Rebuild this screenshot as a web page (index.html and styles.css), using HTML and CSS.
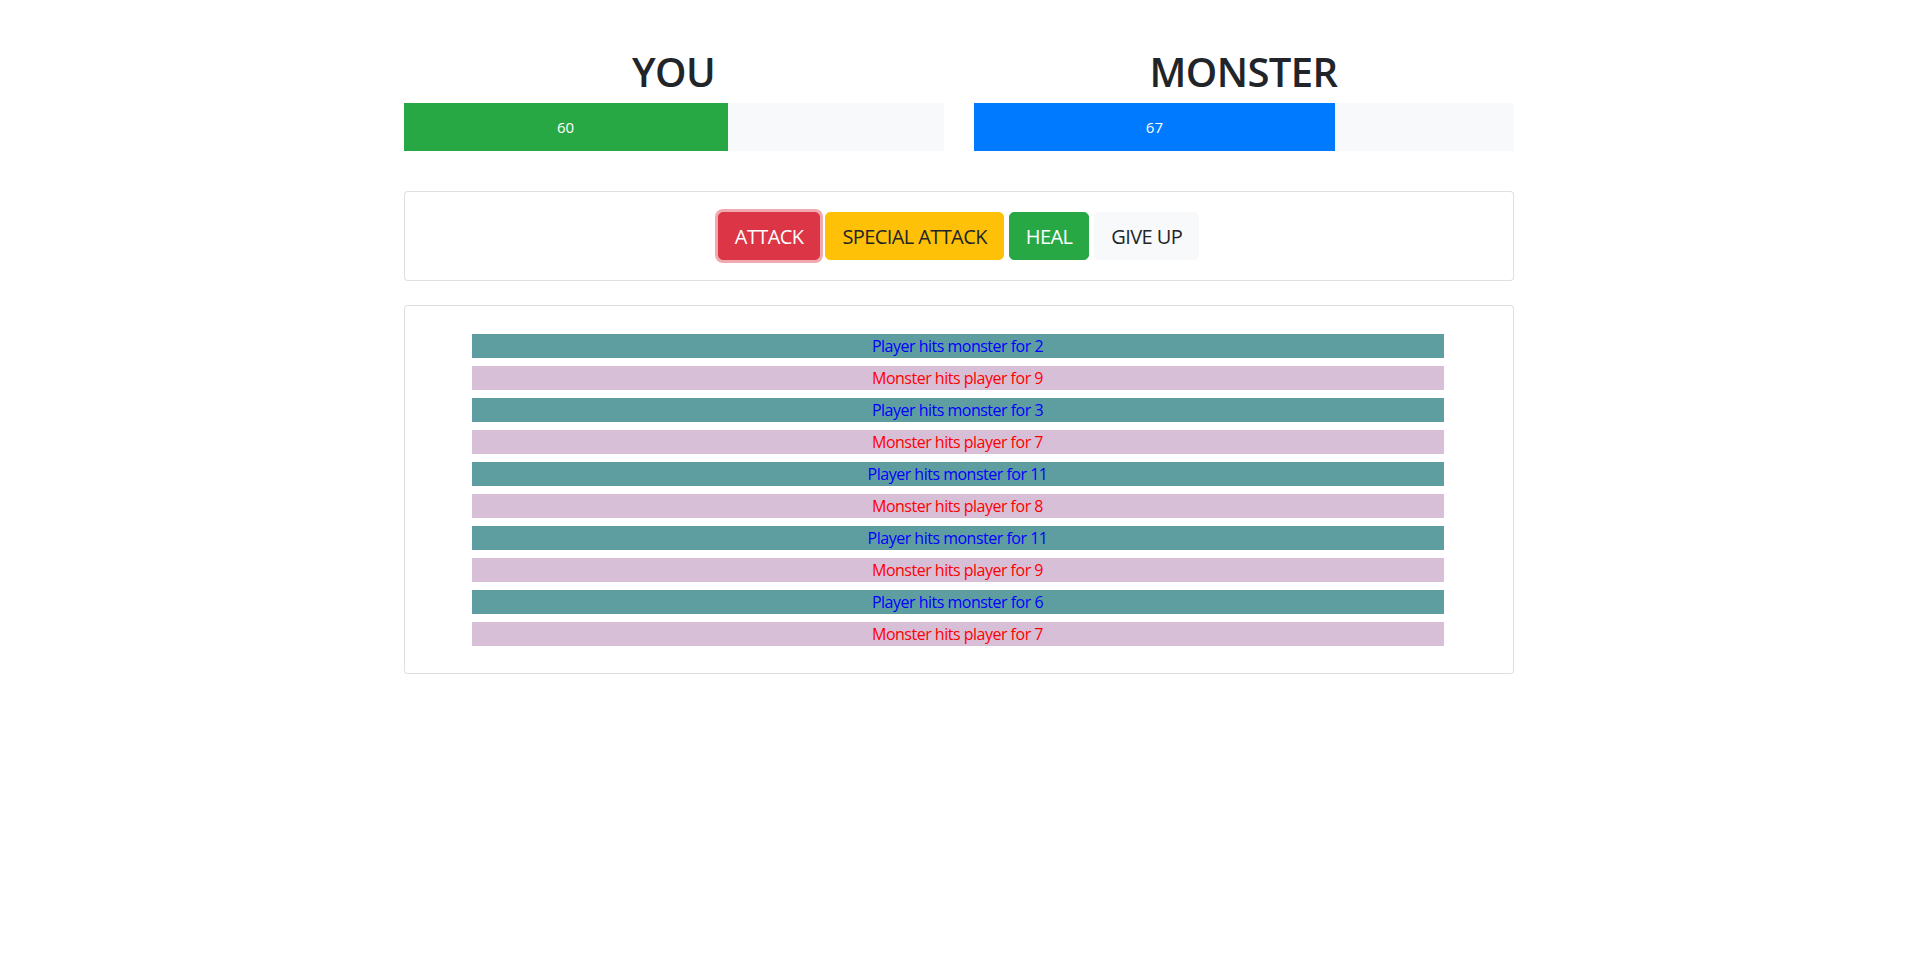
FILE: index.html
```html
<!DOCTYPE html>
<html lang="en">
<head>
<meta charset="utf-8">
<title>Monster Slayer</title>
<link rel="stylesheet" href="styles.css">
</head>
<body>
<div class="container">
  <section class="stats">
    <div class="stat">
      <h1 class="stat-title">YOU</h1>
      <div class="progress">
        <div class="progress-bar bar-player" style="width: 60%">60</div>
      </div>
    </div>
    <div class="stat">
      <h1 class="stat-title">MONSTER</h1>
      <div class="progress">
        <div class="progress-bar bar-monster" style="width: 67%">67</div>
      </div>
    </div>
  </section>

  <section class="card controls">
    <button class="btn btn-danger btn-focus">ATTACK</button>
    <button class="btn btn-warning">SPECIAL ATTACK</button>
    <button class="btn btn-success">HEAL</button>
    <button class="btn btn-light">GIVE UP</button>
  </section>

  <section class="card log">
    <ul class="log-list">
      <li class="log-item player-turn">Player hits monster for 2</li>
      <li class="log-item monster-turn">Monster hits player for 9</li>
      <li class="log-item player-turn">Player hits monster for 3</li>
      <li class="log-item monster-turn">Monster hits player for 7</li>
      <li class="log-item player-turn">Player hits monster for 11</li>
      <li class="log-item monster-turn">Monster hits player for 8</li>
      <li class="log-item player-turn">Player hits monster for 11</li>
      <li class="log-item monster-turn">Monster hits player for 9</li>
      <li class="log-item player-turn">Player hits monster for 6</li>
      <li class="log-item monster-turn">Monster hits player for 7</li>
    </ul>
  </section>
</div>
</body>
</html>
```

FILE: styles.css
```css
* {
  box-sizing: border-box;
}

body {
  margin: 0;
  background: #fff;
  color: #212529;
  font-family: "Open Sans", "Noto Sans", "Liberation Sans", sans-serif;
  font-size: 16px;
  line-height: 1.5;
}

.container {
  width: 1110px;
  margin: 0 auto;
  padding-top: 48px;
}

.stats {
  display: grid;
  grid-template-columns: 1fr 1fr;
  column-gap: 30px;
}

.stat-title {
  margin: 0 0 7px;
  font-size: 40px;
  line-height: 48px;
  font-weight: 600;
  text-align: center;
  letter-spacing: -0.6px;
}

.progress {
  display: flex;
  height: 48px;
  background: #f8f9fa;
}

.progress-bar {
  display: flex;
  align-items: center;
  justify-content: center;
  color: #fff;
  font-size: 15px;
}

.bar-player {
  background: #28a745;
}

.bar-monster {
  background: #007bff;
}

.card {
  border: 1px solid rgba(0, 0, 0, 0.125);
  border-radius: 4px;
  background: #fff;
}

.controls {
  margin-top: 40px;
  padding: 20px;
  display: flex;
  justify-content: center;
  gap: 5px;
}

.btn {
  font-family: inherit;
  font-size: 20px;
  line-height: 30px;
  padding: 9px 16px 7px;
  border: 1px solid transparent;
  border-radius: 5px;
  letter-spacing: -0.6px;
  cursor: pointer;
}

.btn-danger {
  background: #dc3545;
  border-color: #dc3545;
  color: #fff;
}

.btn-focus {
  box-shadow: 0 0 0 3px rgba(225, 83, 97, 0.5);
}

.btn-warning {
  background: #ffc107;
  border-color: #ffc107;
  color: #212529;
}

.btn-success {
  background: #28a745;
  border-color: #28a745;
  color: #fff;
}

.btn-light {
  background: #f8f9fa;
  border-color: #f8f9fa;
  color: #212529;
}

.log {
  margin-top: 24px;
  padding: 28px 69px 27px 67px;
}

.log-list {
  list-style: none;
  margin: 0;
  padding: 0;
  display: flex;
  flex-direction: column;
  gap: 8px;
}

.log-item {
  height: 24px;
  line-height: 24px;
  text-align: center;
  letter-spacing: -0.5px;
}

.player-turn {
  background: #5f9ea0;
  color: #0000ff;
}

.monster-turn {
  background: #d8bfd8;
  color: #ff0000;
}
```
